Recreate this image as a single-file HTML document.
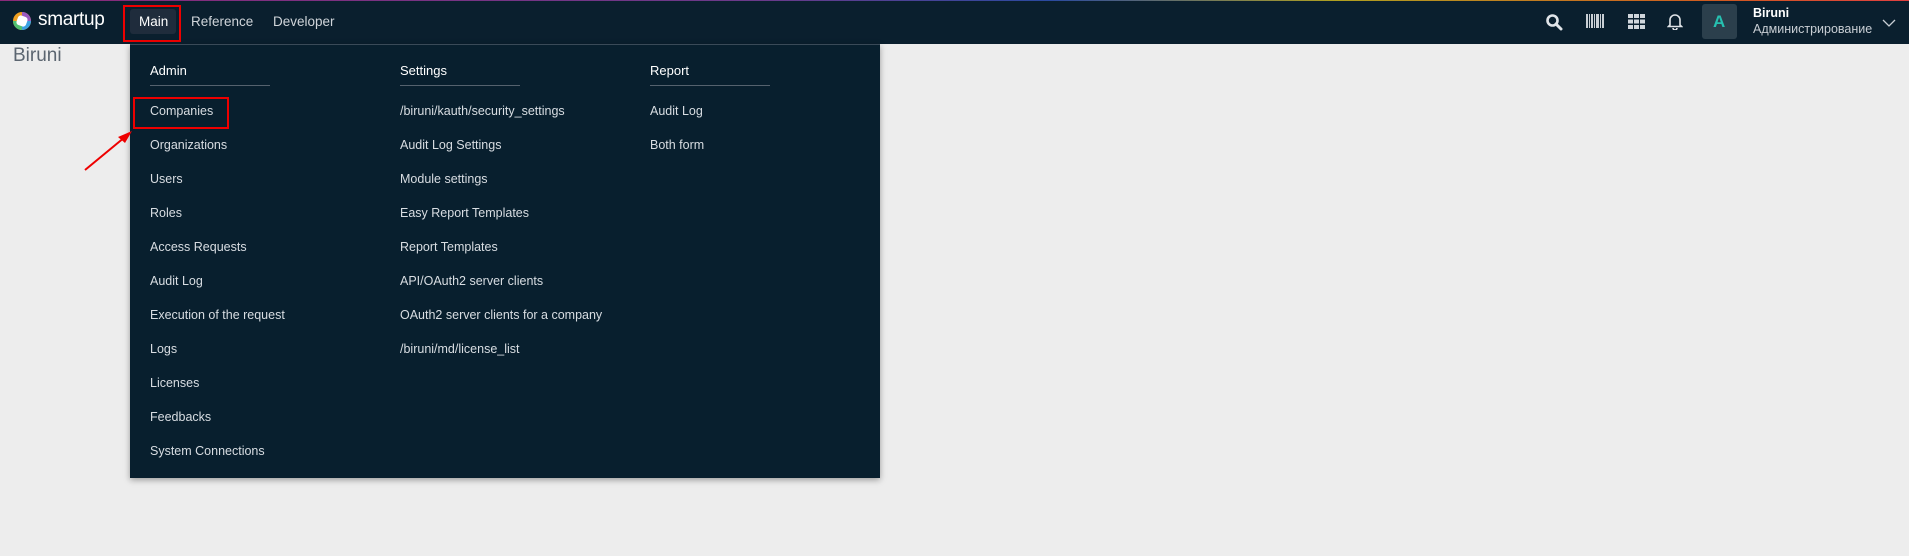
<!DOCTYPE html>
<html><head><meta charset="utf-8"><style>
*{margin:0;padding:0;box-sizing:border-box}
body{width:1909px;height:556px;background:#ededed;font-family:"Liberation Sans","DejaVu Sans",sans-serif;position:relative;overflow:hidden}
.nav{position:absolute;left:0;top:0;width:1909px;height:44px;background:#0a1f2e}
.topline{position:absolute;left:0;top:0;width:1909px;height:1px;background:linear-gradient(90deg,#8a2a7a,#6a3a8a 40%,#2a4aa0 55%,#b0a020 70%,#d05a20 90%,#e04040)}
.t{position:absolute;white-space:nowrap}
.dd{position:absolute;left:130px;top:44px;width:750px;height:434px;background:#081f2e;box-shadow:0 2px 6px rgba(0,0,0,.35);border-top:1px solid #3a4a58}
.h{color:#fff;font-size:13px}
.u{position:absolute;height:1px;width:120px;background:#55626e}
.i{color:#d8dde2;font-size:12.5px}
.red{position:absolute;border:2px solid #e00}
</style></head><body>
<div class="nav"></div><div class="topline"></div>
<svg style="position:absolute;left:12px;top:11px" width="20" height="20" viewBox="0 0 20 20">
<circle cx="10" cy="10" r="9" fill="#f0a020"/><path d="M10 1A9 9 0 0 1 19 10L10 10Z" fill="#9a5ac0"/><path d="M19 10A9 9 0 0 1 10 19L10 10Z" fill="#3aa0e0"/><path d="M10 19A9 9 0 0 1 1 10L10 10Z" fill="#50c070"/>
<rect x="5" y="5" width="10" height="10" rx="3" fill="#fff" transform="rotate(20 10 10)"/></svg>
<div class="t" style="left:38px;top:9px;color:#fff;font-size:19px;letter-spacing:-0.3px">smartup</div>
<div style="position:absolute;left:130px;top:9px;width:46px;height:25px;background:#1f2c3c;border-radius:3px"></div>
<div class="t" style="left:139px;top:14px;color:#fff;font-size:13.5px">Main</div>
<div class="red" style="left:123px;top:5px;width:58px;height:37px"></div>
<div class="t" style="left:191px;top:14px;color:#d0d5da;font-size:13.5px">Reference</div>
<div class="t" style="left:273px;top:14px;color:#d0d5da;font-size:13.5px">Developer</div>
<div class="t" style="left:13px;top:45px;color:#5b6570;font-size:19px">Biruni</div>

<svg style="position:absolute;left:1545px;top:13px" width="18" height="18" viewBox="0 0 18 18"><circle cx="7.5" cy="7.5" r="5" fill="none" stroke="#e0e4e8" stroke-width="2.6"/><path d="M11 11L16 16" stroke="#e0e4e8" stroke-width="3" stroke-linecap="round"/></svg>
<svg style="position:absolute;left:1586px;top:14px" width="18" height="14" viewBox="0 0 18 14" fill="#c8ced4"><rect x="0" width="2" height="14"/><rect x="3" width="1" height="14"/><rect x="5" width="2" height="14"/><rect x="8" width="1" height="14"/><rect x="10" width="3" height="14"/><rect x="14" width="1" height="14"/><rect x="16" width="2" height="14"/></svg>
<svg style="position:absolute;left:1628px;top:14px" width="17" height="15" viewBox="0 0 17 15" fill="#d0d6dc"><rect x="0" y="0" width="5" height="4"/><rect x="6" y="0" width="5" height="4"/><rect x="12" y="0" width="5" height="4"/><rect x="0" y="5.5" width="5" height="4"/><rect x="6" y="5.5" width="5" height="4"/><rect x="12" y="5.5" width="5" height="4"/><rect x="0" y="11" width="5" height="4"/><rect x="6" y="11" width="5" height="4"/><rect x="12" y="11" width="5" height="4"/></svg>
<svg style="position:absolute;left:1667px;top:12px" width="16" height="18" viewBox="0 0 16 18"><path d="M3 13V8a5 5 0 0 1 10 0v5l1.5 1.5h-13Z" fill="none" stroke="#e0e4e8" stroke-width="1.6"/><path d="M6 16a2 2 0 0 0 4 0" fill="none" stroke="#e0e4e8" stroke-width="1.6"/></svg>
<div style="position:absolute;left:1702px;top:4px;width:35px;height:35px;background:#2b3f4c;border-radius:3px"></div>
<div class="t" style="left:1713px;top:12px;color:#26c0b0;font-size:17px;font-weight:bold">A</div>
<div class="t" style="left:1753px;top:6px;color:#fff;font-size:12.5px;font-weight:bold">Biruni</div>
<div class="t" style="left:1753px;top:22px;color:#c8ced4;font-size:12.5px">Администрирование</div>
<svg style="position:absolute;left:1882px;top:19px" width="14" height="9" viewBox="0 0 14 9"><path d="M1 1L7 7L13 1" fill="none" stroke="#c8ced4" stroke-width="1.3"/></svg>

<div class="dd"></div>
<div class="t h" style="left:150px;top:63px">Admin</div><div class="u" style="left:150px;top:85px"></div>
<div class="t h" style="left:400px;top:63px">Settings</div><div class="u" style="left:400px;top:85px"></div>
<div class="t h" style="left:650px;top:63px">Report</div><div class="u" style="left:650px;top:85px"></div>
<div class="t i" style="left:150px;top:104px">Companies</div>
<div class="t i" style="left:150px;top:138px">Organizations</div>
<div class="t i" style="left:150px;top:172px">Users</div>
<div class="t i" style="left:150px;top:206px">Roles</div>
<div class="t i" style="left:150px;top:240px">Access Requests</div>
<div class="t i" style="left:150px;top:274px">Audit Log</div>
<div class="t i" style="left:150px;top:308px">Execution of the request</div>
<div class="t i" style="left:150px;top:342px">Logs</div>
<div class="t i" style="left:150px;top:376px">Licenses</div>
<div class="t i" style="left:150px;top:410px">Feedbacks</div>
<div class="t i" style="left:150px;top:444px">System Connections</div>
<div class="t i" style="left:400px;top:104px">/biruni/kauth/security_settings</div>
<div class="t i" style="left:400px;top:138px">Audit Log Settings</div>
<div class="t i" style="left:400px;top:172px">Module settings</div>
<div class="t i" style="left:400px;top:206px">Easy Report Templates</div>
<div class="t i" style="left:400px;top:240px">Report Templates</div>
<div class="t i" style="left:400px;top:274px">API/OAuth2 server clients</div>
<div class="t i" style="left:400px;top:308px">OAuth2 server clients for a company</div>
<div class="t i" style="left:400px;top:342px">/biruni/md/license_list</div>
<div class="t i" style="left:650px;top:104px">Audit Log</div>
<div class="t i" style="left:650px;top:138px">Both form</div>
<div class="red" style="left:133px;top:97px;width:96px;height:32px"></div>
<svg style="position:absolute;left:80px;top:125px" width="60" height="50" viewBox="0 0 60 50"><path d="M5 45L45 12" stroke="#e00" stroke-width="2"/><path d="M52 6L38 12L45 18Z" fill="#e00"/></svg>
</body></html>
